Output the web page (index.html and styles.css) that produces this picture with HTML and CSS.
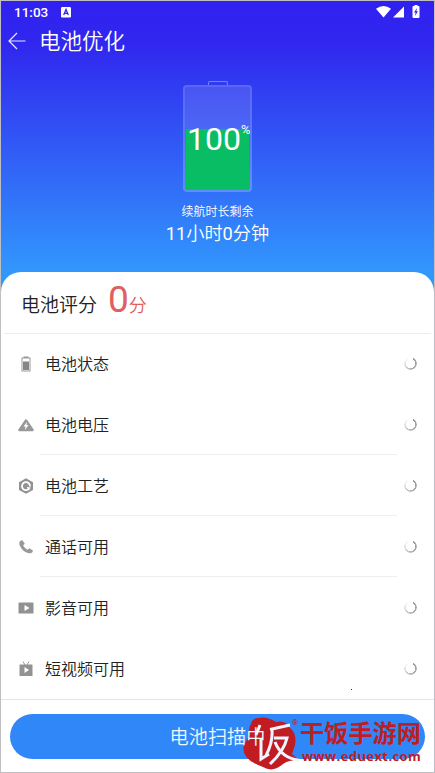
FILE: index.html
```html
<!DOCTYPE html>
<html lang="zh-CN">
<head>
<meta charset="utf-8">
<title>电池优化</title>
<link rel="stylesheet" href="styles.css">
</head>
<body>
<div class="screen">
  <header class="hero">
    <div class="status">
      <span class="clock">11:03</span>
      <svg class="app" width="10" height="11" viewBox="0 0 10 11"><rect width="10" height="10.500" rx="1.200" fill="#fff"/><path d="M2.700 8 5 2.500 7.300 8M3.500 6.300h3" fill="none" stroke="#3025ee" stroke-width="1.300"/></svg>
      <svg class="signals" width="46" height="14" viewBox="0 0 46 14"><path d="M0 3.800Q7.500-1.700 15 3.800L7.500 12.500Z" fill="#fff"/><path d="M28 1.500V12.500H17Z" fill="#fff"/><path d="M37.500 1h1V0h3v1h1q1 0 1 1v10q0 1-1 1h-5q-1 0-1-1V2q0-1 1-1Z" fill="#fff"/><path d="m41 3-3 4.500h1.700L39 11l3-4.800h-1.700Z" fill="#3025ee"/></svg>
    </div>
    <div class="titlebar">
      <svg width="18" height="18" viewBox="0 0 18 18"><path d="M17.500 9H1M9 1 1 9l8 8" fill="none" stroke="#e5e8ff" stroke-width="1.200"/></svg>
      <h1>电池优化</h1>
    </div>
    <div class="battery">
      <div class="cap"></div>
      <div class="cell"><div class="charge"></div></div>
      <div class="percent">100<sup>%</sup></div>
    </div>
    <div class="remain">续航时长剩余</div>
    <div class="time"><b>11</b>小时<b>0</b>分钟</div>
  </header>
  <main class="sheet">
    <div class="score"><span>电池评分</span><b>0</b><i>分</i></div>
    <ul class="list">
      <li class="plain"><svg class="icon" viewBox="0 0 16 16"><path d="M5.500.500h5v1h2v14h-9v-14h2Z" fill="#999"/><path d="M4.500 2.500h7v12h-7Z" fill="#fff"/><path d="M5 5.500h6v8.500H5Z" fill="#858585"/></svg><span>电池状态</span><em class="spin"></em></li>
      <li><svg class="icon" viewBox="0 0 16 16"><path d="M8 3.500 14.500 13h-13Z" fill="#999" stroke="#999" stroke-width="2.500" stroke-linejoin="round"/><path d="M9 5 5.500 9.500h2L7 13l3.500-5h-2Z" fill="#fff"/></svg><span>电池电压</span><em class="spin"></em></li>
      <li><svg class="icon" viewBox="0 0 16 16"><path d="m8 .300 7 4v7.800l-7 3.700-7-3.700V4.300Z" fill="#929292"/><path d="M10.500 11.300A4 4 0 1 1 12 8.500" fill="none" stroke="#fff" stroke-width="1.800"/><path d="m8.700 8.700 4.300 1.100-1.300 1-.3 1.800-1.300-1Z" fill="#fff"/></svg><span>电池工艺</span><em class="spin"></em></li>
      <li><svg class="icon" viewBox="0 0 16 16"><path d="M2 2.200 4 1l2.800 3.500-1.700 2q1.500 2.700 4.400 4.200l1.800-1.500 3.700 2.300q-.3 2.500-2.500 2.800C7 14.700 1 8.300 1.300 4Q1.400 2.700 2 2.200Z" fill="#999"/></svg><span>通话可用</span><em class="spin"></em></li>
      <li class="plain"><svg class="icon" viewBox="0 0 16 16"><rect x=".5" y="2.500" width="15" height="11" rx=".5" fill="#929292"/><path d="m6.500 5 5 3-5 3Z" fill="#fff"/></svg><span>影音可用</span><em class="spin"></em></li>
      <li class="plain"><svg class="icon" viewBox="0 0 16 16"><path d="m5 .500 2 3.500m4-3.500L9 4" stroke="#999" stroke-width="1"/><rect x="1.500" y="3.500" width="13" height="11.500" rx=".5" fill="#929292"/><path d="m6.500 6 4.500 3-4.500 3Z" fill="#fff"/></svg><span>短视频可用</span><em class="spin"></em></li>
    </ul>
    <footer class="foot"><div class="button"><span>电池扫描中</span></div></footer>
  </main>
  <div class="speck"></div>
  <div class="mark">
    <svg width="57" height="54" viewBox="0 0 57 54"><path d="M9 8Q10 2 16 2q9-2 18 4 10-2 14 6 7 5 5 17l-3 9 7 6q-11 0-16 4-10 9-20 3Q-2 43 2 29L8 18Q6 12 9 8Z" fill="#c01c22"/><path d="M28 13.500 48 9M30 13.500q1 13-6 26M32 22h13q-3 13-17 26M33 26q6 16 25 18.500M19 23v20l8-5M18 9l-4 10" fill="none" stroke="#f0f4ff" stroke-width="3"/></svg>
    <div class="words"><strong>干饭手游网</strong><small>www.eduext.com</small></div>
    <span class="reg">®</span>
  </div>
</div>
</body>
</html>
```
FILE: styles.css
```css
* { box-sizing: border-box; }
body { margin: 0; font-family: Roboto, "Noto Sans CJK SC", sans-serif; }
.screen { position: relative; width: 435px; height: 773px; overflow: hidden; border: 1px solid #bfbfc3; background: linear-gradient(#3120f0 0, #3028ef 45px, #3297fd 270px, #3297fd 300px, #fff 300px); display: flex; flex-direction: column; }
.hero { height: 271px; flex: none; color: #fff; display: flex; flex-direction: column; align-items: center; }
.status { width: 100%; height: 22px; padding: 0 12px 0 13px; display: flex; align-items: center; font-size: 13.500px; font-weight: 500; }
.app { margin-left: 13px; }
.signals { margin-left: auto; }
.titlebar { width: 100%; height: 36px; padding-left: 7px; display: flex; align-items: center; gap: 13px; }
h1 { margin: 0; font-size: 21.500px; font-weight: 350; line-height: 36px; padding-top: 2px; }
.battery { position: relative; width: 69px; height: 110px; margin-top: 22px; }
.cap { width: 20px; height: 4px; margin: 0 auto; border: 1px solid #7582f5; border-bottom: 0; border-radius: 2px 2px 0 0; }
.cell { height: 107px; padding: 1px; border: 2px solid rgba(255,255,255,.22); background-clip: padding-box; border-radius: 4px; background-color: rgba(255,255,255,.13); display: flex; align-items: flex-end; }
.charge { width: 100%; height: 60px; background: #08bd64; }
.percent { position: absolute; left: 4px; top: 38px; display: flex; font-size: 32px; line-height: 40px; }
.percent sup { font-size: 13px; line-height: 13px; width: 9px; overflow: hidden; margin-top: 4px; }
.remain { margin-top: 12px; font-size: 12px; line-height: 18px; font-weight: 350; }
.time { font-size: 18.200px; line-height: 26px; font-weight: 350; }
.time b { font-weight: 400; }
.sheet { flex: 1; background: #fff; border-radius: 20px 20px 0 0; display: flex; flex-direction: column; }
.score { height: 62px; margin: 0 3px; border-bottom: 1px solid #ececec; padding-left: 17px; display: flex; align-items: baseline; color: #222; font-size: 19px; font-weight: 350; line-height: 55px; }
.score b { margin-left: 11px; font-size: 37px; font-weight: 400; color: #df6060; }
.score i { font-size: 18px; font-style: normal; color: #df6060; }
.list { margin: -1px 0 0; padding: 0; list-style: none; }
.list li { position: relative; height: 61px; padding: 0 17px; display: flex; align-items: center; color: #222; font-size: 16px; font-weight: 350; }
.list li span { margin-top: -2px; }
.list li::after { content: ""; position: absolute; left: 39px; right: 37px; bottom: 0; height: 1px; background: #eee; }
.list .plain::after { display: none; }
.icon { width: 16px; height: 16px; margin-right: 11px; }
.spin { width: 13px; height: 13px; margin-left: auto; border-radius: 50%; background: conic-gradient(from 30deg, #999, #aaa 120deg, #e2e2e2 240deg, #fff 310deg, #fff); -webkit-mask: radial-gradient(circle, transparent 4.500px, #000 5px); mask: radial-gradient(circle, transparent 4.500px, #000 5px); }
.foot { flex: 1; border-top: 1px solid #e4e4e4; padding: 14px 9px; }
.button { height: 45px; border-radius: 23px; background: #3087f8; color: #edfaff; text-align: center; font-size: 19.200px; font-weight: 350; line-height: 48px; }
.button span { position: relative; z-index: 2; }
.speck { position: absolute; left: 350px; top: 688px; width: 1px; height: 1px; background: #333; }
.mark { position: absolute; z-index: 1; left: 241px; top: 715px; display: flex; color: #c01c22; }
.words { margin-left: 1px; padding-top: 4px; display: flex; flex-direction: column; }
.words strong { font-size: 24.200px; line-height: 29px; font-weight: 700; white-space: nowrap; }
.words small { margin-left: 2px; font: bold 13px/15px "Open Sans", sans-serif; letter-spacing: .4px; }
.reg { position: absolute; left: 50px; top: 2px; font-size: 8px; line-height: 10px; }
```
